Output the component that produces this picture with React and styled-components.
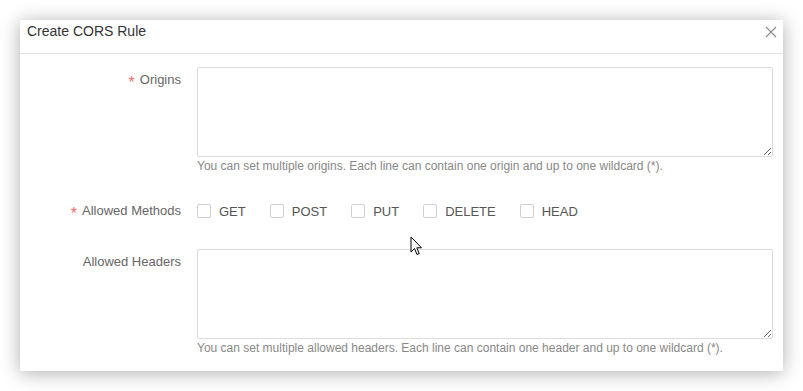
import React from 'react';
import styled, { createGlobalStyle } from 'styled-components';

const GlobalStyle = createGlobalStyle`
    body {
        margin: 0;
        background: #fff;
        font-family: "Liberation Sans", Arial, sans-serif;
    }
`;

const Page = styled.div`
    padding: 20px;
    position: relative;
`;

const Dialog = styled.div`
    width: 763px;
    background: #fff;
    box-shadow: 0 2px 18px rgba(0, 0, 0, 0.32);
`;

const Header = styled.div`
    height: 33px;
    border-bottom: 1px solid #e5e5e5;
    display: flex;
    align-items: center;
    justify-content: space-between;
    padding: 0 6px 0 7px;
    box-sizing: content-box;
`;

const Title = styled.div`
    font-size: 14px;
    color: #333;
    margin-top: -11px;
`;

const Close = styled.button`
    border: 0;
    background: none;
    padding: 0;
    width: 12px;
    height: 12px;
    margin-top: -9px;
    display: flex;
    cursor: pointer;
`;

const Body = styled.div`
    padding: 13px 10px 14px 0;
    display: flex;
    flex-direction: column;
`;

const Row = styled.div`
    display: grid;
    grid-template-columns: 161px 1fr;
    column-gap: 16px;
    margin-bottom: ${p => p.$gap || 0}px;
`;

const Label = styled.div`
    text-align: right;
    font-size: 13px;
    color: #666;
    height: ${p => p.$lh || 26}px;
    line-height: ${p => p.$lh || 26}px;
    span {
        color: #f56c6c;
        font-size: 16px;
        line-height: 0;
        margin-right: 5px;
        vertical-align: -4px;
    }
`;

const Area = styled.textarea`
    display: block;
    width: 100%;
    height: 90px;
    box-sizing: border-box;
    border: 1px solid #dcdcdc;
    border-radius: 2px;
    resize: vertical;
    font-family: inherit;
    font-size: 13px;
    outline: none;
`;

const Help = styled.div`
    font-size: 12px;
    color: #888;
    line-height: 18px;
`;

const Methods = styled.div`
    display: flex;
    align-items: center;
    gap: 24px;
    height: 32px;
`;

const Check = styled.label`
    display: flex;
    align-items: center;
    gap: 8px;
    font-size: 13px;
    color: #555;
    cursor: pointer;
`;

const Box = styled.span`
    width: 14px;
    height: 14px;
    box-sizing: border-box;
    border: 1px solid #d0d0d0;
    border-radius: 2px;
    background: #fff;
`;

const Pointer = styled.svg`
    position: absolute;
    left: 410px;
    top: 236px;
`;

const methods = ['GET', 'POST', 'PUT', 'DELETE', 'HEAD'];

const App = () => {
    return (
        <>
            <GlobalStyle />
            <Page>
                <Dialog>
                    <Header>
                        <Title>Create CORS Rule</Title>
                        <Close aria-label="close">
                            <svg width="12" height="12" viewBox="0 0 12 12">
                                <path d="M1 1L11 11M11 1L1 11" stroke="#8a8a8a" strokeWidth="1.1" fill="none" />
                            </svg>
                        </Close>
                    </Header>
                    <Body>
                        <Row $gap={20}>
                            <Label><span>*</span>Origins</Label>
                            <div>
                                <Area />
                                <Help>You can set multiple origins. Each line can contain one origin and up to one wildcard (*).</Help>
                            </div>
                        </Row>
                        <Row $gap={22}>
                            <Label $lh={32}><span>*</span>Allowed Methods</Label>
                            <Methods>
                                {methods.map(m => (
                                    <Check key={m}><Box />{m}</Check>
                                ))}
                            </Methods>
                        </Row>
                        <Row>
                            <Label>Allowed Headers</Label>
                            <div>
                                <Area />
                                <Help>You can set multiple allowed headers. Each line can contain one header and up to one wildcard (*).</Help>
                            </div>
                        </Row>
                    </Body>
                </Dialog>
                <Pointer width="13" height="20" viewBox="0 0 13 20">
                    <path d="M1 1L1 16L4.5 12.5L7 18.5L9.2 17.6L6.8 11.8L11.5 11.8Z" fill="#fff" stroke="#000" strokeWidth="1" strokeLinejoin="miter" />
                </Pointer>
            </Page>
        </>
    );
};

export default App;
